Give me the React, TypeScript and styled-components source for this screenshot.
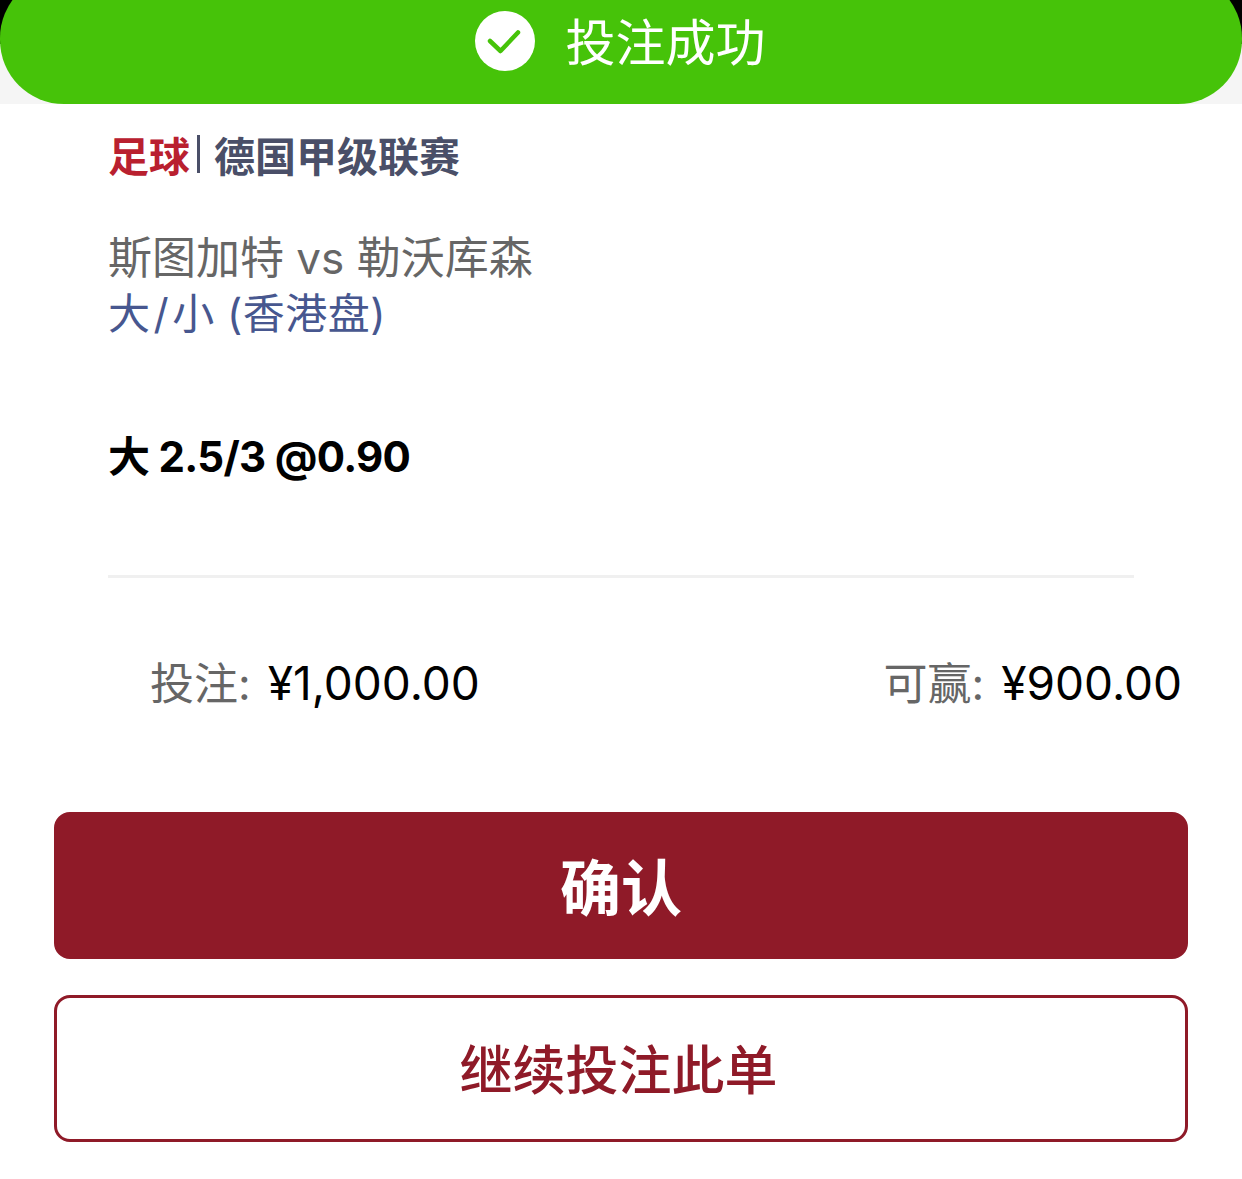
// App.tsx

import React from 'react'
import styled, { createGlobalStyle } from 'styled-components'

const GlobalStyle = createGlobalStyle`
  html, body {
    margin: 0;
    padding: 0;
    background: #fff;
  }
  body {
    font-family: Inter, "Noto Sans CJK SC", sans-serif;
  }
`

const Page = styled.div`
  width: 1242px;
  height: 1179px;
  overflow: hidden;
  background: #fff;
`

const HeaderBack = styled.div`
  height: 104px;
  overflow: hidden;
  background: linear-gradient(#000 0, #000 44px, #f5f5f5 44px);
`

const Banner = styled.div`
  height: 130px;
  margin-top: -26px;
  display: flex;
  align-items: center;
  justify-content: center;
  gap: 32px;
  box-sizing: border-box;
  padding: 8px 2px 0 0;
  background: #46c309;
  border-radius: 64px;
  color: #fff;
  font-size: 50px;
  line-height: 64px;
`

const BannerIcon = styled.svg`
  display: block;
  margin-top: -5px;
`

const BannerText = styled.span`
  margin-left: -1px;
`

const Body = styled.div`
  padding: 0 54px;
`

const Info = styled.div`
  padding: 28px 108px 0;
`

const League = styled.div`
  display: flex;
  align-items: center;
  height: 50px;
  margin-top: -3px;
  font-size: 41px;
  font-weight: 700;
  color: #4a4f68;
`

const Sport = styled.span`
  color: #b9202f;
`

const Bar = styled.span`
  width: 3px;
  height: 38px;
  margin: 0 14px 0 7px;
  background: #4a4f68;
`

const MatchName = styled.div`
  margin-top: 52px;
  font-size: 44px;
  line-height: 55px;
  color: #666;
`

const Market = styled.div`
  font-size: 42px;
  letter-spacing: 0.5px;
  line-height: 55px;
  color: #47578f;
`

const Slash = styled.span`
  margin: 0 3px;
`

const Pick = styled.div`
  margin-top: 88px;
  font-size: 42px;
  font-weight: 700;
  letter-spacing: -0.7px;
  line-height: 56px;
  color: #000;
`

const Divider = styled.div`
  height: 3px;
  margin: 90px 108px 0;
  background: #f0f0f0;
`

const Totals = styled.div`
  display: flex;
  justify-content: space-between;
  margin-top: 73px;
  padding: 0 60px 0 150px;
`

const Total = styled.div`
  display: flex;
  align-items: center;
  gap: 17px;
  height: 60px;
  font-size: 44px;
  color: #666;
`

const Amount = styled.span`
  padding-top: 4px;
  font-size: 46px;
  color: #000;
`

const Button = styled.button<{ $primary?: boolean }>`
  display: flex;
  align-items: center;
  justify-content: center;
  width: 1134px;
  height: 147px;
  box-sizing: border-box;
  padding: ${(p) => (p.$primary ? '0 0 3px' : '0 5px 4px 0')};
  border-radius: 16px;
  font-family: inherit;
  border: 3px solid #8f1a28;
  background: ${(p) => (p.$primary ? '#8f1a28' : '#fff')};
  color: ${(p) => (p.$primary ? '#fff' : '#8f1a28')};
  font-size: ${(p) => (p.$primary ? '61px' : '53px')};
  font-weight: ${(p) => (p.$primary ? 700 : 500)};
`

const Buttons = styled.div`
  display: flex;
  flex-direction: column;
  gap: 36px;
  margin-top: 101px;
`

const App: React.FC = () => {
  return (
    <Page>
      <GlobalStyle />
      <HeaderBack>
        <Banner>
          <BannerIcon width='60' height='60' viewBox='0 0 60 60'>
            <circle cx='30' cy='30' r='30' fill='#fff' />
            <path
              d='M15 30 L25.5 40 L43 21.5'
              fill='none'
              stroke='#46c309'
              strokeWidth='4.5'
              strokeLinecap='round'
              strokeLinejoin='round'
            />
          </BannerIcon>
          <BannerText>投注成功</BannerText>
        </Banner>
      </HeaderBack>
      <Info>
        <League>
          <Sport>足球</Sport>
          <Bar />
          德国甲级联赛
        </League>
        <MatchName>斯图加特 vs 勒沃库森</MatchName>
        <Market>
          大<Slash>/</Slash>小 (香港盘)
        </Market>
        <Pick>大 2.5/3 @0.90</Pick>
      </Info>
      <Divider />
      <Totals>
        <Total>
          投注:
          <Amount>¥1,000.00</Amount>
        </Total>
        <Total>
          可赢:
          <Amount>¥900.00</Amount>
        </Total>
      </Totals>
      <Body>
        <Buttons>
          <Button $primary>确认</Button>
          <Button>继续投注此单</Button>
        </Buttons>
      </Body>
    </Page>
  )
}

export default App
